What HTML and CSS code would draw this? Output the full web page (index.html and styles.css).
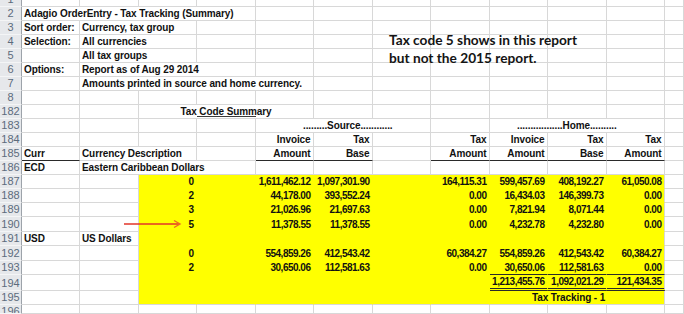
FILE: index.html
```html
<!DOCTYPE html>
<html>
<head>
<meta charset="utf-8">
<link rel="stylesheet" href="styles.css">
</head>
<body>
<div class="sheet">
<span class="h">1</span><span></span><span></span><span></span><span></span><span></span><span></span><span></span><span></span><span></span><span></span><span></span><span></span>
<span class="h">2</span><span class="s4">Adagio OrderEntry - Tax Tracking (Summary)</span><span></span><span></span><span></span><span></span><span></span><span></span><span></span><span></span>
<span class="h">3</span><span>Sort order:</span><span class="s2">Currency, tax group</span><span></span><span></span><span></span><span></span><span></span><span></span><span></span><span></span><span></span>
<span class="h">4</span><span>Selection:</span><span class="s2">All currencies</span><span></span><span></span><span></span><span></span><span></span><span></span><span></span><span></span><span></span>
<span class="h">5</span><span></span><span class="s2">All tax groups</span><span></span><span></span><span></span><span></span><span></span><span></span><span></span><span></span><span></span>
<span class="h">6</span><span>Options:</span><span class="s3">Report as of Aug 29 2014</span><span></span><span></span><span></span><span></span><span></span><span></span><span></span><span></span>
<span class="h">7</span><span></span><span class="s4">Amounts printed in source and home currency.</span><span></span><span></span><span></span><span></span><span></span><span></span><span></span>
<span class="h">8</span><span></span><span></span><span></span><span></span><span></span><span></span><span></span><span></span><span></span><span></span><span></span><span></span>
<span class="h">182</span><span></span><span></span><span class="s3 tcs">Tax Code Summary</span><span></span><span></span><span></span><span></span><span></span><span></span><span></span>
<span class="h">183</span><span></span><span></span><span></span><span></span><span class="s3 src">.........Source............</span><span></span><span class="s3 home">.................Home..........</span><span></span>
<span class="h">184</span><span></span><span></span><span></span><span></span><span class="r">Invoice</span><span class="r">Tax</span><span></span><span class="r">Tax</span><span class="r">Invoice</span><span class="r">Tax</span><span class="r">Tax</span><span></span>
<span class="h">185</span><span class="bb">Curr</span><span class="s2 ub">Currency Description</span><span></span><span class="r bb">Amount</span><span class="r bb">Base</span><span></span><span class="r bb">Amount</span><span class="r bb">Amount</span><span class="r bb">Base</span><span class="r bb">Amount</span><span></span>
<span class="h">186</span><span>ECD</span><span class="s3">Eastern Caribbean Dollars</span><span></span><span></span><span></span><span></span><span></span><span></span><span></span><span></span>
<span class="h">187</span><span></span><span></span><span class="y r">0</span><span class="y"></span><span class="y r">1,611,462.12</span><span class="y r">1,097,301.90</span><span class="y"></span><span class="y r">164,115.31</span><span class="y r">599,457.69</span><span class="y r">408,192.27</span><span class="y r k">61,050.08</span><span></span>
<span class="h">188</span><span></span><span></span><span class="y r">2</span><span class="y"></span><span class="y r">44,178.00</span><span class="y r">393,552.24</span><span class="y"></span><span class="y r">0.00</span><span class="y r">16,434.03</span><span class="y r">146,399.73</span><span class="y r k">0.00</span><span></span>
<span class="h">189</span><span></span><span></span><span class="y r">3</span><span class="y"></span><span class="y r">21,026.96</span><span class="y r">21,697.63</span><span class="y"></span><span class="y r">0.00</span><span class="y r">7,821.94</span><span class="y r">8,071.44</span><span class="y r k">0.00</span><span></span>
<span class="h">190</span><span></span><span></span><span class="y r">5</span><span class="y"></span><span class="y r">11,378.55</span><span class="y r">11,378.55</span><span class="y"></span><span class="y r">0.00</span><span class="y r">4,232.78</span><span class="y r">4,232.80</span><span class="y r k">0.00</span><span></span>
<span class="h">191</span><span>USD</span><span>US Dollars</span><span class="y"></span><span class="y"></span><span class="y"></span><span class="y"></span><span class="y"></span><span class="y"></span><span class="y"></span><span class="y"></span><span class="y k"></span><span></span>
<span class="h">192</span><span></span><span></span><span class="y r">0</span><span class="y"></span><span class="y r">554,859.26</span><span class="y r">412,543.42</span><span class="y"></span><span class="y r">60,384.27</span><span class="y r">554,859.26</span><span class="y r">412,543.42</span><span class="y r k">60,384.27</span><span></span>
<span class="h">193</span><span></span><span></span><span class="y r">2</span><span class="y"></span><span class="y r">30,650.06</span><span class="y r">112,581.63</span><span class="y"></span><span class="y r">0.00</span><span class="y r bb">30,650.06</span><span class="y r bb">112,581.63</span><span class="y r k bb">0.00</span><span></span>
<span class="h">194</span><span></span><span></span><span class="y"></span><span class="y"></span><span class="y"></span><span class="y"></span><span class="y"></span><span class="y"></span><span class="y r dbl">1,213,455.76</span><span class="y r dbl">1,092,021.29</span><span class="y r k dbl">121,434.35</span><span></span>
<span class="h">195</span><span></span><span></span><span class="y z"></span><span class="y z"></span><span class="y z"></span><span class="y z"></span><span class="y z"></span><span class="y z"></span><span class="s3 y z k tt">Tax Tracking - 1</span><span></span>
<span class="h last">196</span><span></span><span></span><span></span><span></span><span></span><span></span><span></span><span></span><span></span><span></span><span></span><span></span>
</div>
<div class="note">Tax code 5 shows in this report<br>but not the 2015 report.</div>
<svg class="arrow" width="64" height="12" viewBox="0 0 64 12"><line x1="2" y1="6" x2="57" y2="6" stroke="#e2342a" stroke-width="1.4"/><polyline points="52,2.5 58,6 52,9.5" fill="none" stroke="#ee6a22" stroke-width="1.4"/></svg>
</body>
</html>
```

FILE: styles.css
```css
html, body {
  margin: 0;
  padding: 0;
  background: #fff;
}
body {
  width: 684px;
  height: 314px;
  overflow: hidden;
  position: relative;
}
.sheet {
  display: grid;
  grid-template-columns: 22px 58px 59px 58px 59px 58px 59px 58px 59px 58px 59px 58px 1fr;
  grid-template-rows: 7px repeat(15, 14px) 15px 14px 15px 14px 16px 14px 1fr;
  height: 314px;
  font-family: "Liberation Sans", Arial, sans-serif;
  font-size: 10px;
  font-weight: 700;
  letter-spacing: -0.1px;
  color: #111;
}
.sheet > span {
  display: flex;
  align-items: flex-end;
  box-sizing: border-box;
  min-width: 0;
  padding: 0 2px;
  line-height: 13px;
  white-space: nowrap;
  overflow: hidden;
  border-right: 1px solid #d8d8d8;
  border-bottom: 1px solid #d8d8d8;
}
.sheet > .h {
  justify-content: center;
  font-family: "Liberation Sans", Arial, sans-serif;
  font-weight: 400;
  font-size: 11px;
  letter-spacing: 0;
  color: #5c6b7c;
  background: #e6e8eb;
  border-bottom-color: #f4f5f6;
  border-right-color: #9da3aa;
}
.sheet > .last { align-items: flex-start; }
.sheet > .r { justify-content: flex-end; padding-right: 2.5px; }
.sheet > .y.r { letter-spacing: -0.5px; }
.s2 { grid-column: span 2; }
.s3 { grid-column: span 3; }
.s4 { grid-column: span 4; }
.sheet > .y {
  background-color: #ffff00;
  border-color: #ffff00;
}
.sheet > .k { border-right-color: #d8d8d8; }
.sheet > .z { border-bottom-color: #d8d8d8; }
.sheet > .bb { border-bottom-color: #2a2a2a; }
.sheet > .dbl { border-bottom: 3px double #2a2a2a; }
.sheet > .tcs {
  justify-content: center;
  background-image: linear-gradient(#3a3a3a, #3a3a3a), linear-gradient(#3a3a3a, #3a3a3a);
  background-repeat: no-repeat;
  background-origin: border-box;
  background-size: 59px 1px, 59px 1px;
  background-position: 58px 100%, 58px calc(100% - 2px);
}
.sheet > .ub {
  background-image: linear-gradient(#2a2a2a, #2a2a2a);
  background-repeat: no-repeat;
  background-origin: border-box;
  background-size: 59px 1px;
  background-position: 0 100%;
}
.sheet > .src { padding-left: 47px; }
.sheet > .home { padding-left: 27px; }
.sheet > .tt { padding-left: 42px; }
.note {
  position: absolute;
  left: 389px;
  top: 31px;
  font-family: Lato, "Open Sans", sans-serif;
  font-weight: 700;
  font-size: 13.7px;
  line-height: 18px;
  color: #141414;
  white-space: nowrap;
}
.arrow {
  position: absolute;
  left: 122px;
  top: 218px;
}
```
